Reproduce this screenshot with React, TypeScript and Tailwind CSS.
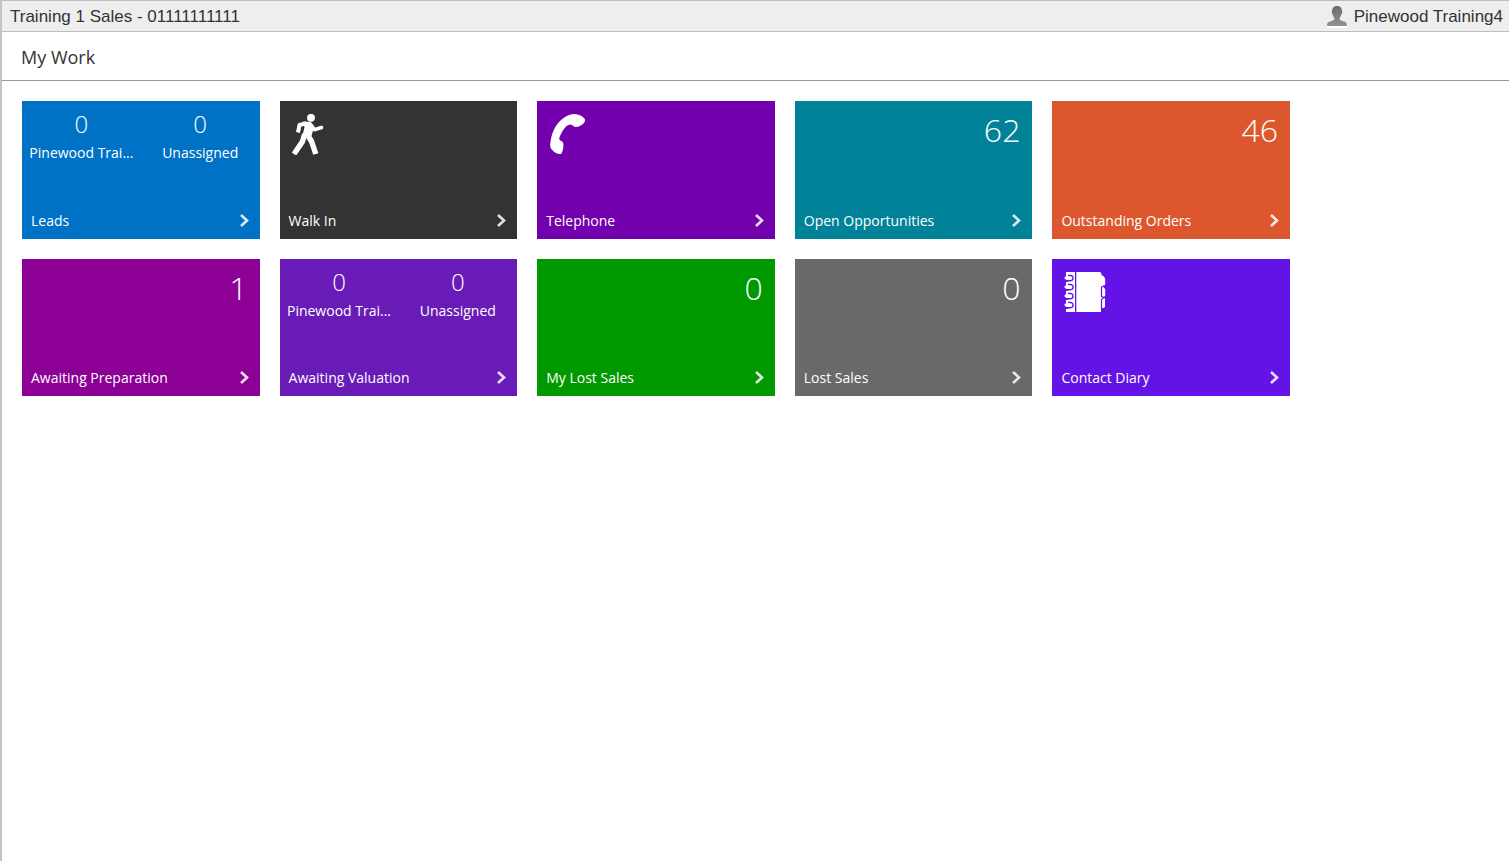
import type { ReactNode } from "react";

type Count = { value: number; label: string };

type Tile = {
  title: string;
  color: string;
  total?: number;
  counts?: Count[];
  icon?: ReactNode;
};

const WalkIcon = () => (
  <svg width="33" height="41" viewBox="0 0 33 41" fill="none" stroke="#fff" strokeLinejoin="round">
    <circle cx="19" cy="3.800" r="3.900" fill="#fff" stroke="none" />
    <path d="M6 18.500 7.500 11l7-1.800" strokeWidth="4" />
    <path d="M10 7.800h8.500l3.600 4.600-2.600 9.600-9.500 2 2.500-11z" fill="#fff" stroke="none" />
    <path d="M18.500 10.500l4 5.200 7-2.200" strokeWidth="3.600" strokeLinecap="round" />
    <path d="M15 20l4.600 7.500 4.200 12.500" strokeWidth="5.400" />
    <path d="M12.700 20l-2.200 7.500L2 40" strokeWidth="5.400" />
  </svg>
);

const PhoneIcon = () => (
  <svg width="37" height="40" viewBox="-1 0 37 40" fill="#fff">
    <path d="M.2 31C1 20 4.500 12.500 10.500 6.500 15 2.500 19.500 0 24 0c3.500 0 7 1.500 9.500 3.500 2 1.700 2 3.500.5 5.500-2 2.300-5 4-8.500 4-2 0-3-2.500-5-2.500-3 0-6 3-8.500 7.500-1.500 3-3.200 6-2.700 7.200.5 1.500 3.700 2 4 4.300.4 3.500-.3 7-1.800 10.200-2.500.8-5.500-.2-8-2.500C1.500 35.500 0 33.500.2 31z" />
  </svg>
);

const DiaryIcon = ({ line }: { line: string }) => (
  <svg width="42" height="40" viewBox="-1 0 42 40">
    <path fill="#fff" d="M1 0h9v40H1zM11.300 0H35l1.500 1.500v2h1.500l2.200 3v6l-1.700 2v1l1.700 1.500v7L38.500 25l1.500 2v8l-1.500 1H36v4H11.300z" />
    <path d="M39.500 13.500 36.500 15v9.500l2.500 1-2.500 2V36" stroke={line} strokeWidth="1.200" fill="none" />
    {[6, 15, 24, 33].map((y) => (
      <g key={y} transform={`translate(0 ${y})`}>
        <path d="M3-2.500h2.500a2.600 2.600 0 0 1 0 5.200H1" stroke={line} strokeWidth="1.400" fill="none" />
        <rect x="-.5" y="-1.400" width="6.500" height="2.900" rx="1.400" fill="#fff" />
        <rect x="1" y="2" width="2" height="2" fill={line} />
      </g>
    ))}
  </svg>
);

const UserIcon = () => (
  <svg width="20" height="22" viewBox="0 0 20 22">
    <defs>
      <linearGradient id="user-fill" x1="0" y1="0" x2="0" y2="1">
        <stop offset="0" stopColor="#6b6b6b" />
        <stop offset="1" stopColor="#929292" />
      </linearGradient>
    </defs>
    <rect y="19" width="20" height="3" fill="#fff" />
    <path
      fill="url(#user-fill)"
      d="M10 0c3 0 5 1.800 5 4.500 0 1 .4 1.500.2 2.500-.2.800-.8 1-1 1.800-.2 1.300-.8 2.200-1.400 2.900v2c1.500 1.300 5.200 1.500 6.500 3 .6.800.7 2 .7 3.300H0c0-1.300.1-2.500.7-3.300 1.300-1.500 5-1.700 6.500-3v-2c-.6-.7-1.200-1.600-1.400-2.900-.2-.8-.8-1-1-1.800C4.600 6 5 5.500 5 4.500 5 1.800 7 0 10 0z"
    />
  </svg>
);

const Chevron = () => (
  <svg width="9" height="14" viewBox="0 0 9 14" fill="none" stroke="#fff" strokeOpacity=".85" strokeWidth="2.600">
    <path d="M1 1 7 6.500l-6 5.500" />
  </svg>
);

const staffCounts: Count[] = [
  { value: 0, label: "Pinewood Trai..." },
  { value: 0, label: "Unassigned" },
];

const tiles: Tile[] = [
  { title: "Leads", color: "bg-[#0072c6]", counts: staffCounts },
  { title: "Walk In", color: "bg-[#333333]", icon: <WalkIcon /> },
  { title: "Telephone", color: "bg-[#7200ac]", icon: <PhoneIcon /> },
  { title: "Open Opportunities", color: "bg-[#008299]", total: 62 },
  { title: "Outstanding Orders", color: "bg-[#dc572e]", total: 46 },
  { title: "Awaiting Preparation", color: "bg-[#8c0095]", total: 1 },
  { title: "Awaiting Valuation", color: "bg-[#691bb8]", counts: staffCounts },
  { title: "My Lost Sales", color: "bg-[#009900]", total: 0 },
  { title: "Lost Sales", color: "bg-[#696969]", total: 0 },
  { title: "Contact Diary", color: "bg-[#6413e6]", icon: <DiaryIcon line="#6413e6" /> },
];

const WorkTile = ({ title, color, total, counts, icon }: Tile) => {
  return (
    <a href="#" className={`flex aspect-[19/11] flex-col justify-between text-white ${color}`}>
      {counts && (
        <div className="grid grid-cols-2 pt-[7px] text-center">
          {counts.map((count) => (
            <div key={count.label}>
              <div className="text-2xl font-light">{count.value}</div>
              <div className="pt-[3px] text-sm whitespace-nowrap">{count.label}</div>
            </div>
          ))}
        </div>
      )}
      {icon && <div className="px-3 pt-[13px]">{icon}</div>}
      {total !== undefined && (
        <div className="px-3 pt-[11px] text-right text-[32px] leading-9 font-light">{total}</div>
      )}
      <div className="mt-auto flex items-center justify-between pr-[11px] pb-2 pl-[9px]">
        <span className="text-sm">{title}</span>
        <Chevron />
      </div>
    </a>
  );
};

const App = () => {
  return (
    <div className="min-h-screen border-l-2 border-[#c4c4c4] bg-white font-['Open_Sans',sans-serif] text-[#333333]">
      <header className="flex h-8 items-center justify-between border-y border-[#bdbdbd] bg-[#eeeeee] pt-px pr-[6px] pl-2 font-['Liberation_Sans',sans-serif] text-[17px]">
        <span>Training 1 Sales - 01111111111</span>
        <div className="flex items-center gap-[7px]">
          <UserIcon />
          <span>Pinewood Training4</span>
        </div>
      </header>
      <div className="flex h-[49px] items-center border-b border-[#999999] px-[19px] pt-px">
        <h1 className="text-lg">My Work</h1>
      </div>
      <main className="p-5">
        <div className="grid max-w-[1268px] grid-cols-5 gap-5">
          {tiles.map((tile) => (
            <WorkTile key={tile.title} {...tile} />
          ))}
        </div>
      </main>
    </div>
  );
};

export default App;
